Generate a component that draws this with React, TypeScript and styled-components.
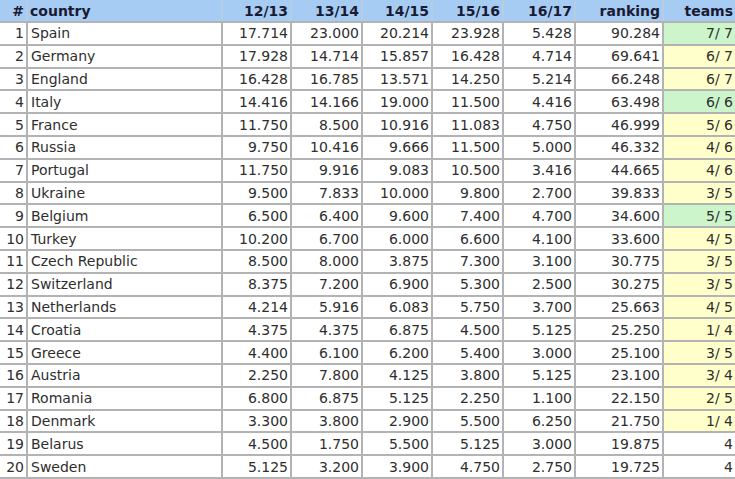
import React from "react";
import styled, { createGlobalStyle } from "styled-components";

const Global = createGlobalStyle`
  html, body { margin: 0; padding: 0; background: #ffffff; }
  body { font-family: "DejaVu Sans", Verdana, sans-serif; }
`;

type Row = [string, string, string, string, string, string, string, string, "g" | "y" | "w"];

const rows: Row[] = [
  ["Spain", "17.714", "23.000", "20.214", "23.928", "5.428", "90.284", "7/ 7", "g"],
  ["Germany", "17.928", "14.714", "15.857", "16.428", "4.714", "69.641", "6/ 7", "y"],
  ["England", "16.428", "16.785", "13.571", "14.250", "5.214", "66.248", "6/ 7", "y"],
  ["Italy", "14.416", "14.166", "19.000", "11.500", "4.416", "63.498", "6/ 6", "g"],
  ["France", "11.750", "8.500", "10.916", "11.083", "4.750", "46.999", "5/ 6", "y"],
  ["Russia", "9.750", "10.416", "9.666", "11.500", "5.000", "46.332", "4/ 6", "y"],
  ["Portugal", "11.750", "9.916", "9.083", "10.500", "3.416", "44.665", "4/ 6", "y"],
  ["Ukraine", "9.500", "7.833", "10.000", "9.800", "2.700", "39.833", "3/ 5", "y"],
  ["Belgium", "6.500", "6.400", "9.600", "7.400", "4.700", "34.600", "5/ 5", "g"],
  ["Turkey", "10.200", "6.700", "6.000", "6.600", "4.100", "33.600", "4/ 5", "y"],
  ["Czech Republic", "8.500", "8.000", "3.875", "7.300", "3.100", "30.775", "3/ 5", "y"],
  ["Switzerland", "8.375", "7.200", "6.900", "5.300", "2.500", "30.275", "3/ 5", "y"],
  ["Netherlands", "4.214", "5.916", "6.083", "5.750", "3.700", "25.663", "4/ 5", "y"],
  ["Croatia", "4.375", "4.375", "6.875", "4.500", "5.125", "25.250", "1/ 4", "y"],
  ["Greece", "4.400", "6.100", "6.200", "5.400", "3.000", "25.100", "3/ 5", "y"],
  ["Austria", "2.250", "7.800", "4.125", "3.800", "5.125", "23.100", "3/ 4", "y"],
  ["Romania", "6.800", "6.875", "5.125", "2.250", "1.100", "22.150", "2/ 5", "y"],
  ["Denmark", "3.300", "3.800", "2.900", "5.500", "6.250", "21.750", "1/ 4", "y"],
  ["Belarus", "4.500", "1.750", "5.500", "5.125", "3.000", "19.875", "4", "w"],
  ["Sweden", "5.125", "3.200", "3.900", "4.750", "2.750", "19.725", "4", "w"],
];

const widths = [27, 195, 69, 71, 70, 71, 72, 88, 72];
const headers = ["#", "country", "12/13", "13/14", "14/15", "15/16", "16/17", "ranking", "teams"];

const Table = styled.table`
  border-collapse: collapse;
  table-layout: fixed;
  width: 735px;
  font-size: 14px;
  color: #2e2e2e;
`;

const HeadCell = styled.th<{ $left?: boolean }>`
  background: #a7ccf3;
  color: #1a1a33;
  font-weight: bold;
  height: 21px;
  padding: 0 2px 0 2px;
  text-align: ${(p) => (p.$left ? "left" : "right")};
  border-right: 2px solid #b7cde3;
  border-bottom: 2px solid #b3b3b3;
  white-space: nowrap;
  overflow: hidden;
  &:last-child { border-right: none; }
`;

const BodyRow = styled.tr`
  height: 22.8px;
`;

const Cell = styled.td<{ $left?: boolean; $tone?: "g" | "y" | "w" }>`
  padding: ${(p) => (p.$left ? "0 2px 0 3px" : "0 2px 0 2px")};
  text-align: ${(p) => (p.$left ? "left" : "right")};
  background: ${(p) => (p.$tone === "g" ? "#ccf5cc" : p.$tone === "y" ? "#ffffcc" : "#ffffff")};
  border-right: 2px solid #b3b3b3;
  border-bottom: 2px solid #b3b3b3;
  white-space: pre;
  overflow: hidden;
  &:last-child { border-right: none; }
`;

export default function App() {
  return (
    <>
      <Global />
      <Table>
        <colgroup>
          {widths.map((w, i) => (
            <col key={i} style={{ width: w }} />
          ))}
        </colgroup>
        <thead>
          <tr>
            {headers.map((h, i) => (
              <HeadCell key={h} $left={i === 1}>
                {h}
              </HeadCell>
            ))}
          </tr>
        </thead>
        <tbody>
          {rows.map((r, i) => (
            <BodyRow key={r[0]}>
              <Cell>{i + 1}</Cell>
              <Cell $left>{r[0]}</Cell>
              <Cell>{r[1]}</Cell>
              <Cell>{r[2]}</Cell>
              <Cell>{r[3]}</Cell>
              <Cell>{r[4]}</Cell>
              <Cell>{r[5]}</Cell>
              <Cell>{r[6]}</Cell>
              <Cell $tone={r[8]}>{r[7]}</Cell>
            </BodyRow>
          ))}
        </tbody>
      </Table>
    </>
  );
}
